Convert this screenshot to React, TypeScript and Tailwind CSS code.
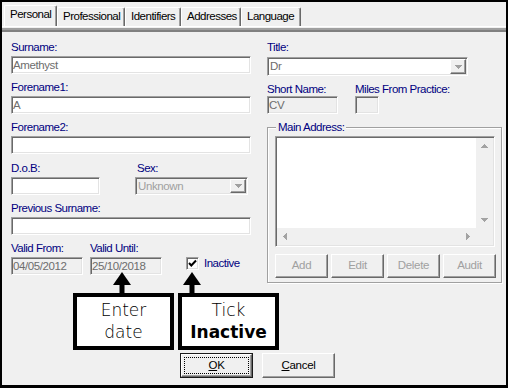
import React from "react";

const sunken =
  "border border-t-[#a0a0a0] border-l-[#a0a0a0] border-b-white border-r-white shadow-[inset_1px_1px_0_#696969,inset_-1px_-1px_0_#e3e3e3]";
const raised =
  "border border-t-white border-l-white border-b-[#696969] border-r-[#696969] shadow-[inset_-1px_-1px_0_#a0a0a0]";

function Label({ children, className = "" }: { children: React.ReactNode; className?: string }) {
  return (
    <div className={`h-[14px] leading-[14px] text-[11.5px] tracking-[-0.5px] text-[#000080] whitespace-nowrap ${className}`}>
      {children}
    </div>
  );
}

function Input({
  className = "",
  text = "",
  bg = "bg-white",
}: {
  className?: string;
  text?: string;
  bg?: string;
}) {
  return (
    <div className={`${sunken} ${bg} h-[18px] pl-[1px] leading-[16px] text-[11.5px] tracking-[-0.4px] text-[#6d6d6d] whitespace-nowrap overflow-hidden ${className}`}>
      {text}
    </div>
  );
}

function TriDown({ color = "#a0a0a0" }: { color?: string }) {
  return (
    <svg width="7" height="4" viewBox="0 0 7 4" shapeRendering="crispEdges">
      <path d="M0 0H7V1H6V2H5V3H4V4H3V3H2V2H1V1H0Z" fill={color} />
    </svg>
  );
}
function TriUp({ color = "#a3a3a3" }: { color?: string }) {
  return (
    <svg width="7" height="4" viewBox="0 0 7 4" shapeRendering="crispEdges">
      <path d="M3 0H4V1H5V2H6V3H7V4H0V3H1V2H2V1H3Z" fill={color} />
    </svg>
  );
}
function TriLeft({ color = "#a3a3a3" }: { color?: string }) {
  return (
    <svg width="4" height="7" viewBox="0 0 4 7" shapeRendering="crispEdges">
      <path d="M0 3H1V2H2V1H3V0H4V7H3V6H2V5H1V4H0Z" fill={color} />
    </svg>
  );
}
function TriRight({ color = "#a3a3a3" }: { color?: string }) {
  return (
    <svg width="4" height="7" viewBox="0 0 4 7" shapeRendering="crispEdges">
      <path d="M0 0H1V1H2V2H3V3H4V4H3V5H2V6H1V7H0Z" fill={color} />
    </svg>
  );
}

function Combo({
  className = "",
  text,
  bg = "bg-white",
  textColor = "text-[#6d6d6d]",
}: {
  className?: string;
  text: string;
  bg?: string;
  textColor?: string;
}) {
  return (
    <div className={`${sunken} ${bg} p-[1px] flex ${className}`}>
      <div className={`flex-1 pl-[1px] leading-[15px] text-[11.5px] tracking-[-0.4px] ${textColor} whitespace-nowrap`}>{text}</div>
      <div className={`${raised} bg-[#f0f0f0] w-[16px] flex items-center justify-center`}>
        <TriDown />
      </div>
    </div>
  );
}

function Tab({ label, selected = false, className = "" }: { label: string; selected?: boolean; className?: string }) {
  return (
    <div
      className={`bg-[#f0f0f0] border-t border-l border-white border-r border-r-[#696969] shadow-[inset_-1px_0_0_#a0a0a0] rounded-tl-[2px] rounded-tr-[2px] pl-[5px] pt-[1px] text-[11.5px] leading-[14px] tracking-[-0.5px] text-black whitespace-nowrap ${
        selected ? "h-[21px]" : "h-[19px]"
      } ${className}`}
    >
      {label}
    </div>
  );
}

function SmallButton({ label }: { label: string }) {
  return (
    <div className={`${raised} bg-[#f0f0f0] w-[53px] h-[24px] flex items-center justify-center text-[11.5px] tracking-[-0.3px] text-[#a0a0a0]`}>
      {label}
    </div>
  );
}

function Arrow({ className = "" }: { className?: string }) {
  return (
    <svg className={`absolute ${className}`} width="18" height="22" viewBox="0 0 18 22">
      <path d="M9 0L0 13H18Z" fill="black" />
      <rect x="6.5" y="12" width="5" height="10" fill="black" />
    </svg>
  );
}

export default function App() {
  return (
    <div className="relative w-[508px] h-[388px] bg-[#f0f0f0] border-t-2 border-l-2 border-r-2 border-b-[3px] border-black flex flex-col overflow-hidden font-['Liberation_Sans',Arial,sans-serif]">
      {/* tab strip */}
      <div className="h-[24px] flex items-end pl-[2px]">
        <Tab label="Personal" selected className="w-[53px]" />
        <Tab label="Professional" className="w-[68px]" />
        <Tab label="Identifiers" className="w-[56px]" />
        <Tab label="Addresses" className="w-[60px]" />
        <Tab label="Language" className="w-[60px]" />
      </div>
      {/* panel top edge */}
      <div className="h-[1px] bg-white" />
      <div className="h-[1px] bg-[#f0f0f0]" />
      <div className="h-[2px] bg-[#a0a0a0]" />
      <div className="h-[2px] bg-[#808080]" />

      {/* content */}
      <div className="flex pl-[9px] pt-[8px] gap-[16px]">
        {/* left column */}
        <div className="w-[240px] flex flex-col">
          <Label>Surname:</Label>
          <Input className="mt-[2px] w-[240px]" text="Amethyst" />
          <Label className="mt-[6px]">Forename1:</Label>
          <Input className="mt-[2px] w-[240px]" text="A" />
          <Label className="mt-[6px]">Forename2:</Label>
          <Input className="mt-[2px] w-[240px]" />
          <div className="flex mt-[7px]">
            <div className="w-[124px]">
              <Label>D.o.B:</Label>
              <Input className="mt-[2px] w-[89px]" />
            </div>
            <div>
              <Label className="pl-[2px]">Sex:</Label>
              <Combo className="mt-[2px] w-[113px] h-[18px]" text="Unknown" bg="bg-[#f0f0f0]" textColor="text-[#a0a0a0]" />
            </div>
          </div>
          <Label className="mt-[6px]">Previous Surname:</Label>
          <Input className="mt-[2px] w-[240px]" />
          <div className="flex mt-[6px]">
            <div className="w-[79px]">
              <Label>Valid From:</Label>
              <Input className="mt-[2px] w-[72px]" text="04/05/2012" bg="bg-[#f0f0f0]" />
            </div>
            <div className="w-[96px]">
              <Label>Valid Until:</Label>
              <Input className="mt-[2px] w-[72px]" text="25/10/2018" bg="bg-[#f0f0f0]" />
            </div>
            <div className="pt-[16px] flex items-start">
              <div className={`${sunken} bg-white w-[13px] h-[13px] flex items-center justify-center`}>
                <svg width="9" height="9" viewBox="0 0 9 9">
                  <path d="M1 4L3.3 6.5L8 1.5" stroke="black" strokeWidth="2" fill="none" />
                </svg>
              </div>
              <div className="ml-[5px] -mt-[1px] text-[11.5px] leading-[14px] tracking-[-0.5px] text-[#000080]">Inactive</div>
            </div>
          </div>
        </div>

        {/* right column */}
        <div className="w-[235px] flex flex-col">
          <Label>Title:</Label>
          <Combo className="mt-[3px] w-[201px] h-[19px]" text="Dr" />
          <div className="flex mt-[6px]">
            <div className="w-[88px]">
              <Label>Short Name:</Label>
              <Input className="w-[71px]" text="CV" bg="bg-[#f0f0f0]" />
            </div>
            <div>
              <Label>Miles From Practice:</Label>
              <Input className="w-[24px]" bg="bg-[#f0f0f0]" />
            </div>
          </div>
          {/* group box */}
          <div className="relative mt-[13px] w-[235px] h-[156px] border border-[#a0a0a0] shadow-[inset_1px_1px_0_#ffffff,1px_1px_0_#ffffff] pl-[7px] pt-[8px]">
            <div className="absolute left-[8px] top-[-8px] px-[2px] bg-[#f0f0f0] text-[11.5px] leading-[14px] tracking-[-0.5px] text-[#000080]">
              Main Address:
            </div>
            <div className={`${sunken} bg-white p-[1px] w-[220px] h-[111px] flex flex-col`}>
              <div className="flex flex-1">
                <div className="flex-1 bg-white" />
                <div className="w-[17px] bg-[#f0f0f0] flex flex-col items-center justify-between py-[6px]">
                  <TriUp />
                  <TriDown color="#a3a3a3" />
                </div>
              </div>
              <div className="h-[17px] flex">
                <div className="flex-1 bg-[#f0f0f0] flex items-center justify-between px-[6px]">
                  <TriLeft />
                  <TriRight />
                </div>
                <div className="w-[17px] bg-[#f0f0f0]" />
              </div>
            </div>
            <div className="flex gap-[3px] mt-[7px]">
              <SmallButton label="Add" />
              <SmallButton label="Edit" />
              <SmallButton label="Delete" />
              <SmallButton label="Audit" />
            </div>
          </div>
        </div>
      </div>

      {/* OK / Cancel */}
      <div className="mt-auto mb-[7px] flex pl-[178px] gap-[9px]">
        <div className="w-[73px] h-[25px] border border-[#1a1a1a]">
          <div className={`${raised} bg-[#f0f0f0] h-full p-[2px]`}>
            <div className="h-full border border-dotted border-black flex items-center justify-center text-[11.5px] tracking-[-0.3px] text-black">
              <span>
                <span className="underline">O</span>K
              </span>
            </div>
          </div>
        </div>
        <div className={`${raised} bg-[#f0f0f0] w-[73px] h-[25px] flex items-center justify-center text-[11.5px] tracking-[-0.3px] text-black`}>
          <span>
            <span className="underline">C</span>ancel
          </span>
        </div>
      </div>

      {/* annotation callouts */}
      <Arrow className="left-[111px] top-[270px]" />
      <Arrow className="left-[181px] top-[270px]" />
      <div className="absolute left-[71px] top-[291px] w-[101px] h-[57px] border-4 border-black bg-white flex flex-col items-center justify-center font-['DejaVu_Sans',sans-serif] font-light text-[17px] leading-[21.6px] text-black">
        <div>Enter</div>
        <div>date</div>
      </div>
      <div className="absolute left-[176px] top-[291px] w-[101px] h-[57px] border-4 border-black bg-white flex flex-col items-center justify-center font-['DejaVu_Sans',sans-serif] text-[17px] leading-[21.6px] text-black">
        <div className="font-light">Tick</div>
        <div className="font-bold">Inactive</div>
      </div>
    </div>
  );
}
